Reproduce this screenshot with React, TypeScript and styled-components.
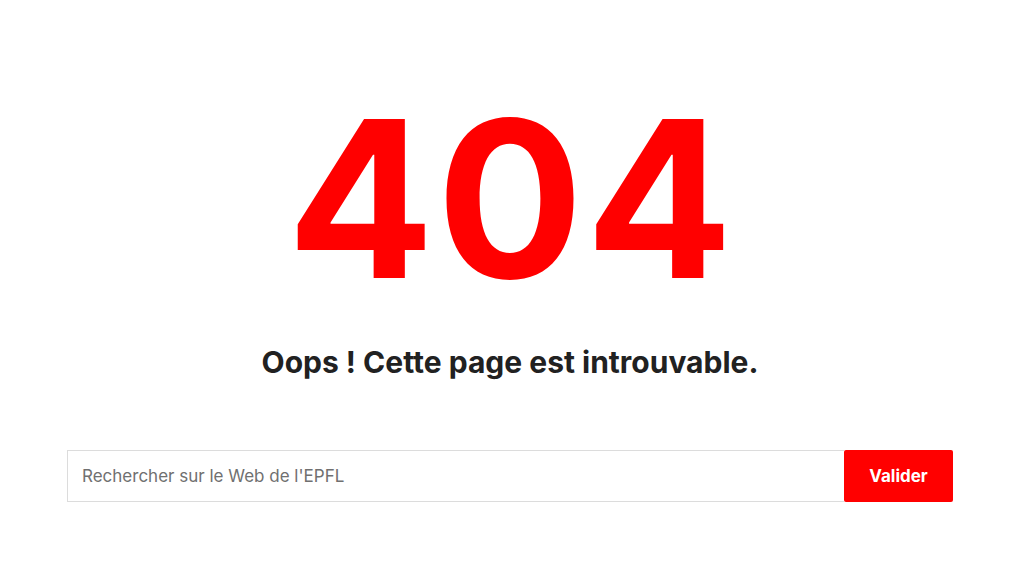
import React from "react";
import styled, { createGlobalStyle } from "styled-components";

const Global = createGlobalStyle`
  html, body { margin: 0; padding: 0; background: #fff; }
  body { font-family: Inter, "Liberation Sans", Arial, sans-serif; color: #212121; }
`;

const Page = styled.main`
  width: 886px;
  margin: 0 auto;
  padding-top: 90px;
  display: flex;
  flex-direction: column;
  align-items: center;
  transform: translateX(-2px);
`;

const Code = styled.h1`
  margin: 0;
  font-family: Inter, "Liberation Sans", Arial, sans-serif;
  font-weight: 700;
  font-size: 218px;
  line-height: 218px;
  letter-spacing: 2px;
  text-indent: 2px;
  color: #ff0000;
`;

const Title = styled.h2`
  margin: 34px 0 0;
  font-weight: 700;
  font-size: 30px;
  line-height: 40px;
  color: #212121;
`;

const Form = styled.form`
  margin-top: 68px;
  width: 100%;
  display: flex;
  height: 52px;
`;

const Input = styled.input`
  flex: 1;
  min-width: 0;
  box-sizing: border-box;
  height: 52px;
  border: 1px solid #dcdcdc;
  border-right: none;
  padding: 0 14px;
  font-family: Inter, "Liberation Sans", Arial, sans-serif;
  font-size: 17px;
  color: #212121;
  outline: none;
  &::placeholder { color: #707070; }
`;

const Button = styled.button`
  width: 109px;
  height: 52px;
  border: none;
  border-radius: 2px;
  background: #ff0000;
  color: #fff;
  font-family: Inter, "Liberation Sans", Arial, sans-serif;
  font-weight: 700;
  font-size: 17px;
  cursor: pointer;
`;

export default function App() {
  return (
    <>
      <Global />
      <Page>
        <Code>404</Code>
        <Title>Oops ! Cette page est introuvable.</Title>
        <Form onSubmit={(e) => e.preventDefault()}>
          <Input placeholder="Rechercher sur le Web de l'EPFL" />
          <Button type="submit">Valider</Button>
        </Form>
      </Page>
    </>
  );
}
